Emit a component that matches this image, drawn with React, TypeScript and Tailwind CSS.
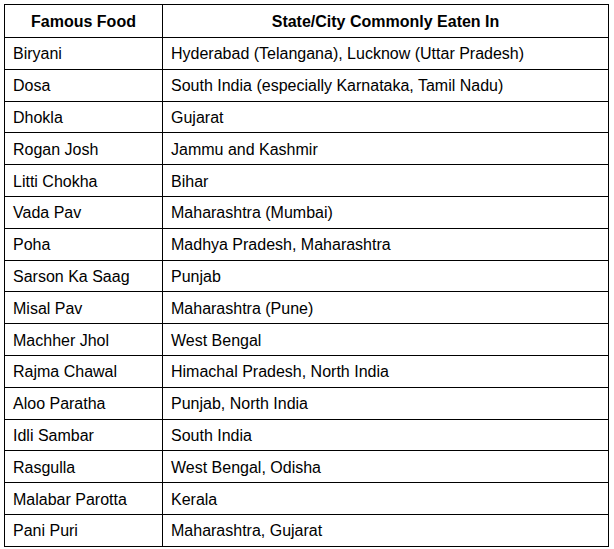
const rows: [string, string][] = [
  ["Biryani", "Hyderabad (Telangana), Lucknow (Uttar Pradesh)"],
  ["Dosa", "South India (especially Karnataka, Tamil Nadu)"],
  ["Dhokla", "Gujarat"],
  ["Rogan Josh", "Jammu and Kashmir"],
  ["Litti Chokha", "Bihar"],
  ["Vada Pav", "Maharashtra (Mumbai)"],
  ["Poha", "Madhya Pradesh, Maharashtra"],
  ["Sarson Ka Saag", "Punjab"],
  ["Misal Pav", "Maharashtra (Pune)"],
  ["Machher Jhol", "West Bengal"],
  ["Rajma Chawal", "Himachal Pradesh, North India"],
  ["Aloo Paratha", "Punjab, North India"],
  ["Idli Sambar", "South India"],
  ["Rasgulla", "West Bengal, Odisha"],
  ["Malabar Parotta", "Kerala"],
  ["Pani Puri", "Maharashtra, Gujarat"],
]

export default function App() {
  return (
    <div className="min-h-screen bg-white pl-[4px] pt-[4px] font-['Liberation_Sans',Arial,sans-serif] text-[16px] text-black">
      <table className="w-[605px] table-fixed border-collapse">
        <colgroup>
          <col className="w-[158px]" />
          <col />
        </colgroup>
        <thead>
          <tr className="h-[33px]">
            <th className="border border-black pt-[2px] text-center font-bold">Famous Food</th>
            <th className="border border-black pt-[2px] text-center font-bold">State/City Commonly Eaten In</th>
          </tr>
        </thead>
        <tbody>
          {rows.map(([food, place]) => (
            <tr key={food} className="h-[31.8px]">
              <td className="border border-black px-[8px] pt-[2px]">{food}</td>
              <td className="border border-black px-[8px] pt-[2px]">{place}</td>
            </tr>
          ))}
        </tbody>
      </table>
    </div>
  )
}
